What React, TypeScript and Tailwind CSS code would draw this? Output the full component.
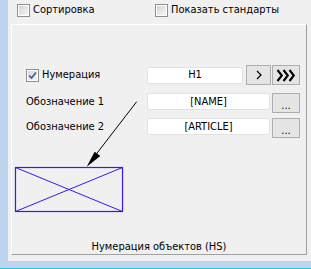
import React from 'react';

const font = { fontFamily: '"DejaVu Sans Condensed", "Liberation Sans", Arial, sans-serif' };

function CheckBox({ checked = false }: { checked?: boolean }) {
    return (
        <div className="w-[13px] h-[13px] border border-[#8e8f8f] bg-white p-[1px] shrink-0">
            <div className="w-full h-full bg-linear-to-br from-[#d4d4d4] to-[#f7f7f7] flex items-center justify-center">
                {checked && (
                    <svg width="9" height="9" viewBox="0 0 9 9">
                        <path d="M1.2 4.6 L3.6 7 L7.9 1.4" fill="none" stroke="#3d5fa6" strokeWidth="1.7" />
                    </svg>
                )}
            </div>
        </div>
    );
}

function Btn({ w, children }: { w: string; children: React.ReactNode }) {
    return (
        <div className={`${w} h-[20px] shrink-0 border border-[#adadad] bg-[#e5e5e5] flex items-center justify-center text-black`}>
            {children}
        </div>
    );
}

function Field({ w, value }: { w: string; value: string }) {
    return (
        <div className={`${w} h-[17px] shrink-0 bg-white border border-[#e2e2e2] rounded-[2px] flex items-center justify-center text-black`}>
            {value}
        </div>
    );
}

export default function App() {
    return (
        <div className="w-[311px] h-[269px] bg-[#f0f0f0] flex flex-col overflow-hidden text-[11px] leading-[14px] text-black" style={font}>
            <div className="flex flex-1 min-h-0">
                <div className="w-[8px] bg-[#bcd4ee]" />
                <div className="flex-1 flex flex-col">
                    {/* верхние флажки */}
                    <div className="h-[24px] flex items-start pt-[3px] pl-[9px]">
                        <div className="w-[138px] flex items-center gap-[3px]">
                            <CheckBox />
                            <span>Сортировка</span>
                        </div>
                        <div className="flex items-center gap-[3px]">
                            <CheckBox />
                            <span>Показать стандарты</span>
                        </div>
                    </div>

                    {/* панель */}
                    <div className="relative ml-[3px] w-[296px] h-[231px] border border-t-white border-l-white border-r-[#a0a0a0] border-b-[#a0a0a0] flex flex-col">
                        <div className="mt-[40px] pl-[14px] flex items-center h-[20px]">
                            <div className="w-[121px] flex items-center gap-[3px]">
                                <CheckBox checked />
                                <span>Нумерация</span>
                            </div>
                            <Field w="w-[96px]" value="H1" />
                            <div className="ml-[3px]">
                                <Btn w="w-[25px]">
                                    <svg width="6" height="10" viewBox="0 0 6 10">
                                        <path d="M1 1 L5 5 L1 9" fill="none" stroke="#000" strokeWidth="1.3" />
                                    </svg>
                                </Btn>
                            </div>
                            <div className="ml-[1px]">
                                <Btn w="w-[28px]">
                                    <svg width="20" height="13" viewBox="0 0 20 13">
                                        <path d="M1.5 1 L5.8 6.5 L1.5 12 M7.5 1 L11.8 6.5 L7.5 12 M13.5 1 L17.8 6.5 L13.5 12" fill="none" stroke="#000" strokeWidth="2.1" />
                                    </svg>
                                </Btn>
                            </div>
                        </div>

                        <div className="mt-[8px] pl-[14px] flex items-start">
                            <div className="w-[121px] h-[17px] flex items-center">Обозначение 1</div>
                            <Field w="w-[123px]" value="[NAME]" />
                            <div className="ml-[2px]">
                                <Btn w="w-[28px]"><span className="text-[11px] leading-none pt-[4px]">...</span></Btn>
                            </div>
                        </div>

                        <div className="mt-[5px] pl-[14px] flex items-start">
                            <div className="w-[121px] h-[17px] flex items-center">Обозначение 2</div>
                            <Field w="w-[123px]" value="[ARTICLE]" />
                            <div className="ml-[2px]">
                                <Btn w="w-[28px]"><span className="text-[11px] leading-none pt-[4px]">...</span></Btn>
                            </div>
                        </div>

                        <div className="mt-auto mb-[0px] text-center">Нумерация объектов (HS)</div>

                        {/* схема: стрелка и прямоугольник */}
                        <svg className="absolute left-0 top-0 pointer-events-none" width="294" height="229" viewBox="0 0 294 229">
                            <line x1="124.7" y1="76.7" x2="80" y2="134.6" stroke="#000" strokeWidth="1" />
                            <polygon points="74.7,141.7 82.6,126.7 88.3,131" fill="#000" />
                            <g stroke="#3c16f2" strokeWidth="1.2" fill="none">
                                <rect x="3.5" y="142.5" width="107" height="44" />
                                <line x1="3.5" y1="142.5" x2="110.5" y2="186.5" strokeWidth="1" />
                                <line x1="110.5" y1="142.5" x2="3.5" y2="186.5" strokeWidth="1" />
                            </g>
                        </svg>
                    </div>
                </div>
            </div>
            <div className="h-[7px] bg-[#bcd4ee]" />
            <div className="h-[1px] bg-[#39bfd6]" />
        </div>
    );
}
